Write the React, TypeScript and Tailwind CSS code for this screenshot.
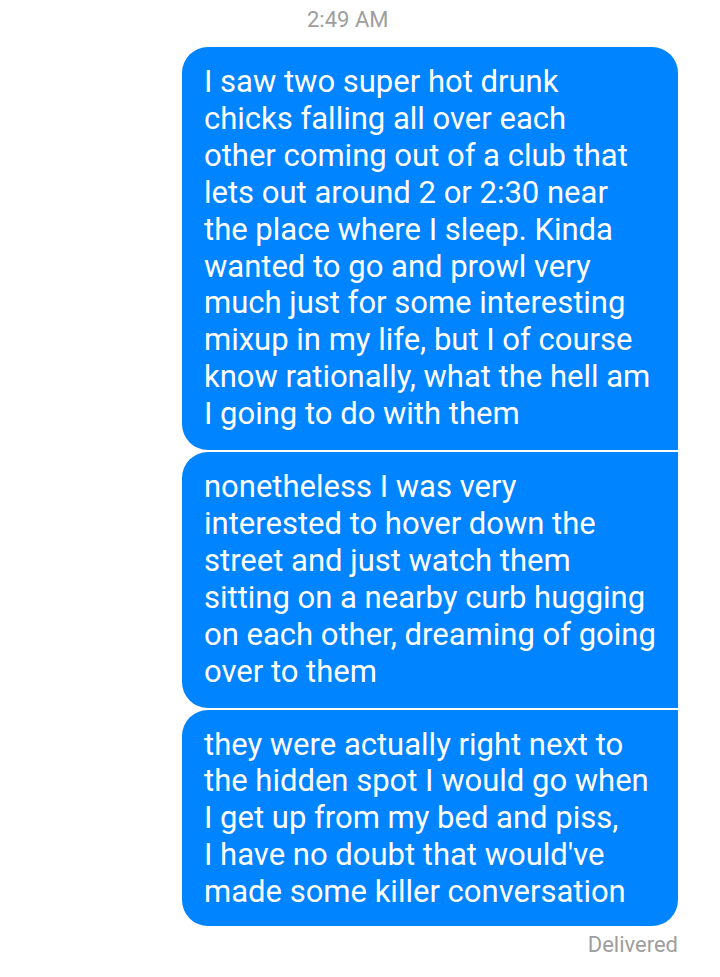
const BUBBLES: { lines: string[]; corners: string; pad: string }[] = [
  {
    lines: [
      'I saw two super hot drunk',
      'chicks falling all over each',
      'other coming out of a club that',
      'lets out around 2 or 2:30 near',
      'the place where I sleep. Kinda',
      'wanted to go and prowl very',
      'much just for some interesting',
      'mixup in my life, but I of course',
      'know rationally, what the hell am',
      'I going to do with them',
    ],
    corners: 'rounded-tl-[26px] rounded-tr-[26px] rounded-bl-[26px]',
    pad: 'pb-[17px]',
  },
  {
    lines: [
      'nonetheless I was very',
      'interested to hover down the',
      'street and just watch them',
      'sitting on a nearby curb hugging',
      'on each other, dreaming of going',
      'over to them',
    ],
    corners: 'rounded-tl-[26px] rounded-bl-[26px]',
    pad: 'pb-[17px]',
  },
  {
    lines: [
      'they were actually right next to',
      'the hidden spot I would go when',
      'I get up from my bed and piss,',
      "I have no doubt that would've",
      'made some killer conversation',
    ],
    corners: 'rounded-tl-[26px] rounded-bl-[26px] rounded-br-[26px]',
    pad: 'pb-[15px]',
  },
]

export default function App() {
  return (
    <div className="w-[720px] h-[977px] bg-white font-['Roboto',sans-serif] overflow-hidden">
      <div className="pt-[7px] pl-[307px] text-[22px] leading-[26px] text-[#9e9e9e]">2:49 AM</div>
      <div className="mt-[14px] ml-[182px] w-[496px] flex flex-col gap-[2px]">
        {BUBBLES.map((b, i) => (
          <div key={i} className={`bg-[#0084ff] text-white pl-[22px] pr-[8px] pt-[17px] ${b.pad} ${b.corners}`}>
            {b.lines.map((l, j) => (
              <div key={j} className="text-[31px] leading-[36.9px] whitespace-nowrap">
                {l}
              </div>
            ))}
          </div>
        ))}
      </div>
      <div className="mt-[6px] w-[678px] text-right text-[22px] leading-[26px] text-[#9e9e9e]">Delivered</div>
    </div>
  )
}
